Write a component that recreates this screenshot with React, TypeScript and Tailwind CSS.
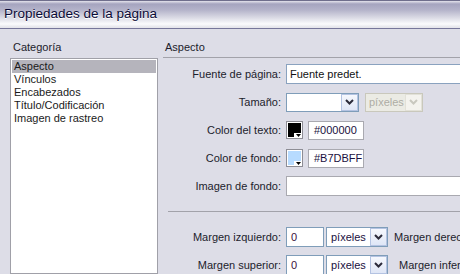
import React from "react";

const font = { fontFamily: '"Liberation Sans", Arial, sans-serif' };

const Chevron = ({ color = "#2b2b3a" }: { color?: string }) => (
  <svg width="9" height="6" viewBox="0 0 9 6">
    <path d="M1 1 L4.5 4.5 L8 1" fill="none" stroke={color} strokeWidth="2" />
  </svg>
);

const ArrowBtn = ({ disabled }: { disabled?: boolean }) => (
  <div
    className={
      "w-[17px] h-full flex items-center justify-center border " +
      (disabled
        ? "border-[#e2e1d8] bg-[#f4f3ee]"
        : "border-[#b4c3e2] bg-[linear-gradient(to_bottom,#f6f8fd,#dfe6f6)]")
    }
  >
    <Chevron color={disabled ? "#c9c8bf" : "#2b2b3a"} />
  </div>
);

const Swatch = ({ color }: { color: string }) => (
  <div className="relative w-[17px] h-[18px] border border-[#8d8d95] bg-white p-px">
    <div className="w-full h-full" style={{ background: color }} />
    <div className="absolute right-0 bottom-0 w-[8px] h-[5px] bg-white flex items-center justify-center">
      <svg width="5" height="3" viewBox="0 0 5 3">
        <path d="M0 0 H5 L2.5 3 Z" fill="#000" />
      </svg>
    </div>
  </div>
);

const Row = ({ label, children }: { label: string; children?: React.ReactNode }) => (
  <div className="flex items-center h-[28px]">
    <div className="w-[120px] text-right pr-[2px] text-[11px] text-[#1c1c2c]">{label}</div>
    <div className="ml-[3px] flex items-center h-full">{children}</div>
  </div>
);

export default function App() {
  const cats = ["Aspecto", "Vínculos", "Encabezados", "Título/Codificación", "Imagen de rastreo"];
  return (
    <div className="w-[460px] h-[274px] overflow-hidden bg-[#dddde7] flex flex-col" style={font}>
      <div className="h-[29px] shrink-0 border-t border-[#6f6e8c] border-b border-b-[#77769a] bg-[linear-gradient(to_bottom,#e4e3ec_0px,#a5a4bf_3px,#b4b3ca_9px,#dcdce6_17px,#fbfbfd_23px,#e6e6ec_26px)] flex items-center pl-[4px]">
        <span className="text-[13.5px] text-[#0a0a36] [text-shadow:0_1px_0_#ffffff]">Propiedades de la página</span>
      </div>
      <div className="flex flex-1 min-h-0">
        <div className="w-[163px] shrink-0 pl-[10px] pt-[11px] flex flex-col">
          <div className="shrink-0 text-[11px] text-[#1c1c2c] pl-[3px] h-[14px] leading-[14px]">Categoría</div>
          <div className="mt-[4px] w-[148px] flex-1 bg-white border border-[#a0a0a8] pt-px px-px">
            {cats.map((c, i) => (
              <div
                key={c}
                className={"h-[13px] leading-[13px] text-[11px] pl-[2px] text-[#1a1a1a] " + (i === 0 ? "bg-[#b5b4bc]" : "")}
              >
                {c}
              </div>
            ))}
          </div>
        </div>
        <div className="flex-1 flex flex-col pt-[11px]">
          <div className="shrink-0 text-[11px] text-[#1c1c2c] pl-[2px] h-[14px] leading-[14px]">Aspecto</div>
          <div className="shrink-0 mt-[3px] h-px bg-[#a2a2aa]" />
          <div className="shrink-0 mt-[2px]">
            <Row label="Fuente de página:">
              <div className="w-[180px] h-[20px] bg-white border border-[#8aa2bf] flex items-center pl-[3px] text-[11px] text-[#111]">
                Fuente predet.
              </div>
            </Row>
            <Row label="Tamaño:">
              <div className="h-[19px] w-[73px] bg-white border border-[#7f9db9] flex justify-end">
                <ArrowBtn />
              </div>
              <div className="ml-[6px] h-[19px] w-[58px] bg-[#ebebe4] border border-[#c9c8bc] flex items-center justify-between pl-[3px]">
                <span className="text-[11px] text-[#aeada4]">píxeles</span>
                <ArrowBtn disabled />
              </div>
            </Row>
            <Row label="Color del texto:">
              <Swatch color="#000000" />
              <div className="ml-[5px] w-[56px] h-[19px] bg-white border border-[#a9a9b0] flex items-center pl-[5px] text-[11px] text-[#1a1040]">
                #000000
              </div>
            </Row>
            <Row label="Color de fondo:">
              <Swatch color="#B7DBFF" />
              <div className="ml-[5px] w-[56px] h-[19px] bg-white border border-[#a9a9b0] flex items-center pl-[5px] text-[11px] text-[#1a1040]">
                #B7DBFF
              </div>
            </Row>
            <Row label="Imagen de fondo:">
              <div className="w-[180px] h-[20px] bg-white border border-[#a9a9b0]" />
            </Row>
          </div>
          <div className="shrink-0 mt-[11px] ml-[5px] h-px bg-[#a2a2aa]" />
          <div className="shrink-0 mt-[11px]">
            <Row label="Margen izquierdo:">
              <div className="w-[38px] h-[20px] bg-white border border-[#7f9db9] flex items-center pl-[4px] text-[11px] text-[#3a1040]">0</div>
              <div className="ml-[2px] w-[62px] h-[20px] bg-white border border-[#7f9db9] flex items-center justify-between pl-[4px]">
                <span className="text-[11px] text-[#1a1040]">píxeles</span>
                <ArrowBtn />
              </div>
              <span className="ml-[6px] text-[11px] text-[#1c1c2c] whitespace-nowrap">Margen derecho:</span>
            </Row>
            <Row label="Margen superior:">
              <div className="w-[38px] h-[20px] bg-white border border-[#7f9db9] flex items-center pl-[4px] text-[11px] text-[#3a1040]">0</div>
              <div className="ml-[2px] w-[62px] h-[20px] bg-white border border-[#7f9db9] flex items-center justify-between pl-[4px]">
                <span className="text-[11px] text-[#1a1040]">píxeles</span>
                <ArrowBtn />
              </div>
              <span className="ml-[11px] text-[11px] text-[#1c1c2c] whitespace-nowrap">Margen inferior:</span>
            </Row>
          </div>
        </div>
      </div>
    </div>
  );
}
